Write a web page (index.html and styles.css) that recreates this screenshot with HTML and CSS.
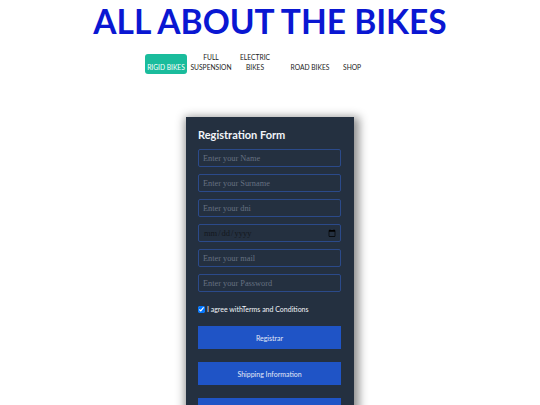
FILE: index.html
```html
<!DOCTYPE html>
<html>
<head>
<meta charset="utf-8">
<link rel="stylesheet" href="styles.css">
</head>
<body>
<header class="header">
  <h1 class="title">ALL ABOUT THE BIKES</h1>
  <nav class="nav">
    <a class="nav-item active" href="#">RIGID BIKES</a>
    <a class="nav-item w-full" href="#">FULL<br>SUSPENSION</a>
    <a class="nav-item w-elec" href="#">ELECTRIC<br>BIKES</a>
    <a class="nav-item w-road" href="#">ROAD BIKES</a>
    <a class="nav-item w-shop" href="#">SHOP</a>
  </nav>
</header>
<main class="main">
  <form class="card">
    <h2 class="card-title">Registration Form</h2>
    <input class="field" type="text" placeholder="Enter your Name">
    <input class="field" type="text" placeholder="Enter your Surname">
    <input class="field" type="text" placeholder="Enter your dni">
    <input class="field date" type="date">
    <input class="field" type="email" placeholder="Enter your mail">
    <input class="field" type="password" placeholder="Enter your Password">
    <label class="agree"><input class="check" type="checkbox" checked>I agree withTerms and Conditions</label>
    <button class="btn" type="button">Registrar</button>
    <button class="btn" type="button">Shipping Information</button>
    <button class="btn" type="button">Login</button>
  </form>
</main>
</body>
</html>
```
FILE: styles.css
```css
html, body {
  margin: 0;
  padding: 0;
  background: #ffffff;
  font-family: Lato, "Liberation Sans", sans-serif;
}
.header {
  display: flex;
  flex-direction: column;
  align-items: center;
}
.title {
  margin: 2px 0 0 0;
  font-size: 33.5px;
  line-height: 38px;
  font-weight: 700;
  color: #0a17d2;
}
.nav {
  display: flex;
  align-items: flex-end;
  margin-top: 12px;
  margin-right: 34px;
}
.nav-item {
  display: block;
  text-decoration: none;
  color: #222;
  font-size: 6.7px;
  line-height: 10px;
  text-align: center;
  padding-bottom: 2px;
}
.active {
  background: #1abc9c;
  color: #fff;
  width: 42px;
  height: 20px;
  box-sizing: border-box;
  padding: 8px 0 2px 0;
  border-radius: 3px;
}
.w-full { width: 44px; margin-left: 2px; }
.w-elec { width: 44px; }
.w-road { width: 66px; }
.w-shop { width: 18px; }
.main {
  display: flex;
  justify-content: center;
  margin-top: 43px;
}
.card {
  width: 168px;
  box-sizing: border-box;
  background: #243040;
  padding: 12px 13px 12px 12px;
  display: flex;
  flex-direction: column;
  box-shadow: 2px 3px 9px 3px rgba(0,0,0,0.45);
}
.card-title {
  margin: 0 0 8px 0;
  font-size: 11px;
  line-height: 12px;
  font-weight: 700;
  color: #f1f4f8;
}
.field {
  height: 18px;
  box-sizing: border-box;
  margin: 0 0 7px 0;
  padding: 0 4px;
  border: 1px solid #2b4a8a;
  border-radius: 2px;
  background: transparent;
  font-family: "Liberation Serif", serif;
  font-size: 8.3px;
  color: #c8d0dc;
  outline: none;
}
.field::placeholder {
  color: #667082;
}
.date {
  color: #14181e;
  font-size: 8.5px;
}
.date::-webkit-datetime-edit,
.date::-webkit-datetime-edit-fields-wrapper,
.date::-webkit-datetime-edit-month-field,
.date::-webkit-datetime-edit-day-field,
.date::-webkit-datetime-edit-year-field,
.date::-webkit-datetime-edit-text {
  color: #14181e;
}
.date::-webkit-calendar-picker-indicator {
  width: 8px;
  height: 8px;
  padding: 0;
}
.agree {
  display: flex;
  align-items: center;
  margin-top: 5px;
  font-size: 7px;
  line-height: 10px;
  color: #f1f4f8;
}
.check {
  width: 7px;
  height: 7px;
  margin: 0 2px 0 0;
}
.btn {
  margin-top: 12px;
  height: 23px;
  border: none;
  background: #1f54c6;
  color: #e2e9f7;
  font-family: Lato, "Liberation Sans", sans-serif;
  font-size: 7px;
}
.btn + .btn {
  margin-top: 13px;
}
```
